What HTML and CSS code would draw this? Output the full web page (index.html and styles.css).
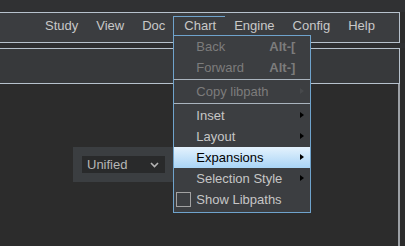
FILE: index.html
```html
<!DOCTYPE html>
<html>
<head>
<meta charset="utf-8">
<link rel="stylesheet" href="styles.css">
</head>
<body>
<div class="app">
  <div class="top-strip"></div>
  <div class="menubar">
    <div class="menu-item">Study</div>
    <div class="menu-item">View</div>
    <div class="menu-item">Doc</div>
    <div class="menu-item open">Chart
      <div class="dropdown">
        <div class="dd-item disabled"><span class="label">Back</span><span class="accel">Alt-[</span></div>
        <div class="dd-item disabled"><span class="label">Forward</span><span class="accel">Alt-]</span></div>
        <div class="sep"></div>
        <div class="dd-item disabled"><span class="label">Copy libpath</span><span class="arrow"></span></div>
        <div class="sep"></div>
        <div class="dd-item"><span class="label">Inset</span><span class="arrow"></span></div>
        <div class="dd-item"><span class="label">Layout</span><span class="arrow"></span></div>
        <div class="dd-item active"><span class="label">Expansions</span><span class="arrow"></span></div>
        <div class="dd-item"><span class="label">Selection Style</span><span class="arrow"></span></div>
        <div class="dd-item check"><span class="box"></span><span class="label">Show Libpaths</span></div>
      </div>
    </div>
    <div class="menu-item">Engine</div>
    <div class="menu-item">Config</div>
    <div class="menu-item">Help</div>
  </div>
  <div class="gap"></div>
  <div class="toolbar"></div>
  <div class="content">
    <div class="select-panel">
      <div class="select">
        <span>Unified</span>
        <svg class="chev" width="9" height="6" viewBox="0 0 9 6"><path d="M1 1 L4.5 4.5 L8 1" fill="none" stroke="#b4b4b4" stroke-width="1.6"/></svg>
      </div>
    </div>
  </div>
</div>
</body>
</html>
```
FILE: styles.css
```css
* { box-sizing: border-box; }
html, body { margin: 0; padding: 0; }
body {
  width: 405px;
  height: 246px;
  overflow: hidden;
  background: #2c2c2c;
  font-family: "Liberation Sans", Arial, sans-serif;
  font-size: 13px;
}
.app { display: flex; flex-direction: column; height: 246px; }
.top-strip { height: 12px; background: #303133; flex: none; }
.menubar {
  flex: none;
  width: 400px;
  height: 31px;
  background: #3b3d40;
  border-top: 1px solid #b7c2cd;
  border-bottom: 1px solid #b7c2cd;
  border-right: 1px solid #b7c2cd;
  display: flex;
  align-items: flex-start;
  padding: 3px 0 0 36px;
  position: relative;
  z-index: 2;
}
.menu-item {
  height: 19px;
  line-height: 19px;
  padding: 0 9px;
  color: #c8c8c8;
  position: relative;
}
.menu-item.open {
  border-top: 1px solid #6fa3cc;
  border-left: 1px solid #6fa3cc;
  margin-left: -1px;
  padding-left: 10px;
  line-height: 18px;
}
.dropdown {
  position: absolute;
  left: -1px;
  top: 18px;
  width: 138px;
  background: #3c3e41;
  border: 1px solid #6fa3cc;
  padding: 0 0 2px;
}
.dd-item {
  height: 21px;
  display: flex;
  align-items: center;
  padding: 0 15px 0 22px;
  color: #c6c6c6;
  position: relative;
  white-space: nowrap;
}
.dd-item .label { flex: 1; }
.dd-item.disabled { color: #7c7c7c; }
.accel { font-weight: bold; color: #7c7c7c; }
.arrow {
  position: absolute;
  right: 6px;
  top: 7px;
  width: 0; height: 0;
  border-top: 3.5px solid transparent;
  border-bottom: 3.5px solid transparent;
  border-left: 4px solid #000;
}
.dd-item.disabled .arrow { border-left-color: #47494c; }
.dd-item.active {
  background: linear-gradient(#e4f2fd, #a9d4f6);
  color: #000;
}
.dd-item.check { padding-left: 2px; }
.box {
  width: 15px; height: 15px;
  border: 1px solid #a2a2a2;
  margin-right: 5px;
  flex: none;
}
.sep { height: 1px; background: #aab4be; margin: 1px 0; }
.gap { height: 5px; flex: none; background: #2e2f31; }
.toolbar {
  flex: none;
  width: 400px;
  height: 36px;
  background: #37393b;
  border-top: 1px solid #b7c2cd;
  border-bottom: 1px solid #b7c2cd;
  border-right: 1px solid #b7c2cd;
}
.content {
  flex: 1;
  width: 400px;
  background: #2c2c2c;
  border-right: 2px solid #9ca0a5;
  padding: 63px 0 0 73px;
}
.select-panel {
  width: 104px;
  height: 35px;
  background: #3b3e41;
  padding: 9px 0 0 9px;
}
.select {
  width: 83px;
  height: 17px;
  background: #292a2b;
  display: flex;
  align-items: center;
  justify-content: space-between;
  padding: 0 6px 0 5px;
  color: #b6b6b6;
  font-size: 13px;
}
.chev { display: block; }
```
